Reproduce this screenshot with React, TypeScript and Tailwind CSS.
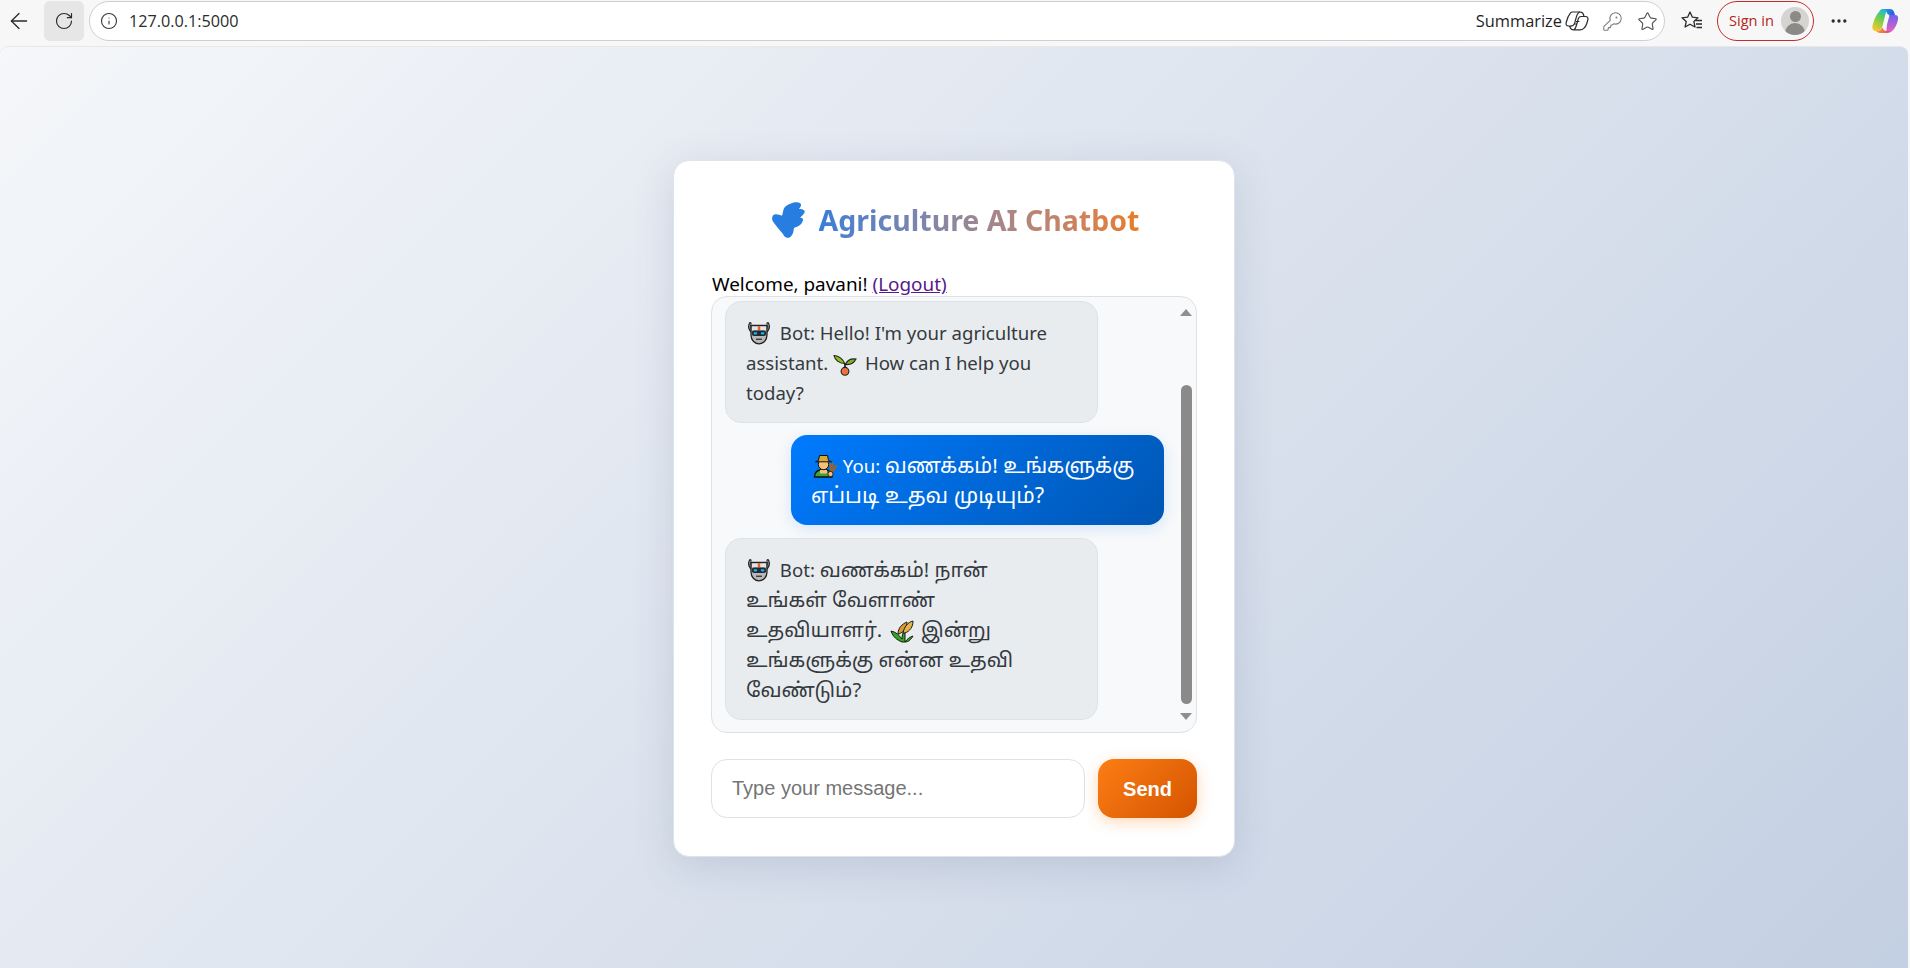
import React from "react";
import { ArrowLeft, RotateCw, Info, KeyRound, Star, MoreHorizontal } from "lucide-react";

const RobotEmoji = () => (
  <svg width="24" height="24" viewBox="0 0 24 24" className="ml-px mr-1 inline-block align-[-5px]">
    <path d="M3.2 2.5 C2 5 2.4 8 4 10 M20.8 2.5 C22 5 21.6 8 20 10" stroke="#222" strokeWidth="2.8" strokeLinecap="round" fill="none" />
    <path d="M3.2 3 C2.4 5 2.8 7.5 4 9.5 M20.8 3 C21.6 5 21.2 7.5 20 9.5" stroke="#bdbdbd" strokeWidth="1" strokeLinecap="round" fill="none" />
    <path d="M4 4.5 H20 V14 C20 19 16.5 22.8 12 22.8 C7.5 22.8 4 19 4 14 Z" fill="#b9b9b9" stroke="#222" strokeWidth="1.3" />
    <path d="M5 5.4 H19 V9 H5 Z" fill="#e4e4e4" />
    <rect x="10.8" y="5.2" width="2.4" height="4" fill="#ef5a26" />
    <rect x="4.8" y="9.5" width="14.4" height="5.6" rx="2.4" fill="#1f2a30" />
    <rect x="6.6" y="11.2" width="3.6" height="2.2" rx="0.8" fill="#22b3ea" />
    <rect x="13.8" y="11.2" width="3.6" height="2.2" rx="0.8" fill="#22b3ea" />
    <rect x="9" y="17.6" width="6" height="1.3" fill="#333" />
  </svg>
);

const SeedlingEmoji = () => (
  <svg width="24" height="24" viewBox="0 0 24 24" className="mr-[3px] inline-block align-[-6px]">
    <path d="M12 12 C10 7 6 4 1 3.5 C2 8 6 11.5 11.5 11.5 Z" fill="#8cc21f" stroke="#222" strokeWidth="1.1" />
    <path d="M12.5 12.5 C14 8.5 18 6.5 23 7 C21 11 17 13 12.5 12.5 Z" fill="#7ab51d" stroke="#222" strokeWidth="1.1" />
    <path d="M12 11 V18" stroke="#222" strokeWidth="1.8" />
    <circle cx="12" cy="19.3" r="3.9" fill="#e8743b" stroke="#222" strokeWidth="1.1" />
  </svg>
);

const FarmerEmoji = () => (
  <svg width="24" height="24" viewBox="0 0 24 24" className="ml-0.5 mr-px inline-block align-[-5px]">
    <path d="M1.5 23 C1.5 17.5 5 15.5 10.5 15.5 C16 15.5 19 18 19 23 Z" fill="#3fa33a" stroke="#111" strokeWidth="1.3" />
    <rect x="7" y="16" width="7" height="3.5" fill="#f3c27a" />
    <circle cx="10.5" cy="10.5" r="5.2" fill="#f2c078" stroke="#111" strokeWidth="1" />
    <path d="M2.5 7.8 H18.5 L15.5 6.4 L14.5 1.5 H6.5 L5.5 6.4 Z" fill="#d9a92e" stroke="#111" strokeWidth="1" />
    <path d="M17 19 L20 10 M19 18 L23 12 M18 14 L17 10" stroke="#9a6426" strokeWidth="2.2" strokeLinecap="round" />
    <circle cx="17.5" cy="20" r="2.6" fill="#f2c078" stroke="#111" strokeWidth="0.8" />
  </svg>
);

const RiceEmoji = () => (
  <svg width="24" height="24" viewBox="0 0 24 24" className="ml-[3px] mr-[2px] inline-block align-[-6px]">
    <path d="M12 23 C7 21 3 18 1 12 C6 13 9 16 12 20 C12 16 13 13 15 11 C15 15 15 19 15 23 Z M15 23 C17 20 20 18 23 17 C21 21 18 23 15 23 Z" fill="#2fa81f" stroke="#1a1a1a" strokeWidth="1" />
    <path d="M8 15 C8 9 12 5 17 3 C17 8 14 13 9 15 Z" fill="#d89c2e" stroke="#1a1a1a" strokeWidth="1" />
    <path d="M13 14 C14 8 18 3 23 2 C23 8 20 12 15 14 Z" fill="#e6b04a" stroke="#1a1a1a" strokeWidth="1" />
  </svg>
);

const TitleIcon = () => (
  <svg width="36" height="36" viewBox="0 0 36 36" className="shrink-0">
    <path
      d="M17 2.3 C20 0.5 24 0 25 0.3 C27 0.6 29.5 1.6 29 3.2 C28.8 5 27.5 6 27 7 C29 7 32.6 7.4 32.7 9.4 C32.8 12 30 13.6 28 15.7 C29.5 15.7 31.4 16.4 31 18.2 C30.4 20.6 29 22 28 23 C26 24.6 24 25 22 26 C21.6 28.5 21.4 31 20 33 C18.6 35.6 16.4 36 15 35.7 C13 35.6 12 34 11 32 C8 28.5 5 25 2 21 C0.4 19 -0.4 16.4 0.4 14.7 C1 13 2.4 12.4 3.6 12.3 C6 12.2 8.4 13.2 10 13.7 C11 11 11 8.4 12 6.3 C13 4.4 15 3.2 17 2.3 Z"
      fill="#277ee0"
    />
  </svg>
);

const CopilotLogo = () => (
  <svg width="28" height="30" viewBox="0 0 28 30">
    <defs>
      <linearGradient id="cpLeft" x1="0.7" y1="0" x2="0.3" y2="1">
        <stop offset="0" stopColor="#1fb6d8" />
        <stop offset="0.45" stopColor="#6fcf4a" />
        <stop offset="1" stopColor="#f7c62f" />
      </linearGradient>
      <linearGradient id="cpTop" x1="0" y1="0" x2="1" y2="0.4">
        <stop offset="0" stopColor="#23a9e6" />
        <stop offset="1" stopColor="#2a5fe0" />
      </linearGradient>
      <linearGradient id="cpRight" x1="0.5" y1="0" x2="0.5" y2="1">
        <stop offset="0" stopColor="#6b63ea" />
        <stop offset="1" stopColor="#ee5fc0" />
      </linearGradient>
      <linearGradient id="cpBottom" x1="0" y1="0" x2="1" y2="0">
        <stop offset="0" stopColor="#f9a72e" />
        <stop offset="1" stopColor="#ef3d6c" />
      </linearGradient>
    </defs>
    <path d="M8 6 C9 3.5 10.5 3 13 3 H17 C15.5 4 14.8 7 14 10 L11.5 20 C10.5 24 8 25 5 25 C2 25 1 22.5 1.5 20 C2.5 15 5 9 8 6 Z" fill="url(#cpLeft)" />
    <path d="M12 3 H19 C21 3 22.5 4 23 6 L24 9 H19 C17.5 9 16 8 15.5 6 C15 4.5 14 3.4 12 3 Z" fill="url(#cpTop)" />
    <path d="M18 9 H24 C26.5 9 27.5 11 27 13.5 C26 19 23 24 20.5 25.5 C19 26.5 17 27 15 27 C15.5 25 15.5 22 16 18.5 L17.5 13 C18 11 18.5 10 18 9 Z" fill="url(#cpRight)" />
    <path d="M5 25 C8 25 10.5 24 11.5 21.5 C12 23.5 13.5 25 15.5 25 H19 C18 26.5 16.5 27 14.5 27 H9 C7.5 27 6 26.3 5 25 Z" fill="url(#cpBottom)" />
  </svg>
);

const SummarizeIcon = () => (
  <svg width="24" height="24" viewBox="0 0 24 24" fill="none" stroke="#2b2b2b" strokeWidth="1.2" strokeLinejoin="round">
    <path d="M7.5 3 H15 C17 3 18.2 4 18.6 6 L19 7.5 H20.5 C22.6 7.5 23.3 9 22.8 11 C22 14.5 20.5 18 18.5 19.6 C17.6 20.4 16.5 20.8 15 20.8 H8.8 C7 20.8 5.6 20 5 18.2 L4.6 17 H3.4 C1.4 17 0.7 15.5 1.2 13.5 C2 10 3.4 6.6 5.3 4.2 C5.9 3.4 6.7 3 7.5 3 Z" />
    <path d="M15 3 C12.8 3.6 12 5.6 11.4 7.8 L9.6 14.4 C9 16.6 7 17.2 4.6 17" />
    <path d="M19 7.5 H16 C14.4 7.5 13.6 8.6 13.2 10 L11.4 16.5 C10.8 18.6 10 20.2 8.8 20.8" />
    <path d="M11 12.5 H14.4 M9.4 15 H12" />
  </svg>
);

const FavoritesIcon = () => (
  <svg width="24" height="24" viewBox="0 0 24 24" fill="none" stroke="#2b2b2b" strokeWidth="1.3" strokeLinejoin="round">
    <path d="M10 3 L12.4 8.2 L18 8.8 L13.9 12.6 L15 18 L10 15.2 L5.1 18 L6.2 12.6 L2 8.8 L7.6 8.2 Z" />
    <path d="M15.5 11.5 H22 M16 15 H22 M16.5 18.5 H22" />
  </svg>
);

// tamil glyphs come out small in this font, so they get their own size
const Ta = ({ children }: { children: React.ReactNode }) => (
  <span className="text-[20.2px] leading-none">{children}</span>
);

const Toolbar = () => (
  <div className="flex h-[46px] shrink-0 items-start pt-px">
    <div className="flex h-10 w-[38px] items-center justify-center">
      <ArrowLeft className="h-[26px] w-[26px] text-[#2b2b2b]" strokeWidth={1.2} />
    </div>
    <div className="ml-1.5 flex h-10 w-10 items-center justify-center rounded-md bg-[#e6e6e6]">
      <RotateCw className="h-[20px] w-[20px] text-[#2b2b2b]" strokeWidth={1.4} />
    </div>
    <div className="ml-[5px] flex h-10 w-[1576px] items-center rounded-full border border-[#cfcfcf] bg-white pl-[10px] pr-[6px]">
      <Info className="h-[18px] w-[18px] text-[#3a3a3a]" strokeWidth={1.5} />
      <span className="ml-[11px] font-['Open_Sans',sans-serif] text-[16.2px] text-[#2b2b2b]">127.0.0.1:5000</span>
      <span className="ml-auto font-['Open_Sans',sans-serif] text-[16.4px] text-[#1f1f1f]">Summarize</span>
      <span className="ml-[3px]">
        <SummarizeIcon />
      </span>
      <KeyRound className="ml-[13px] h-[21px] w-[21px] text-[#7a7a7a]" strokeWidth={1.2} />
      <Star className="ml-[14px] h-[21px] w-[21px] text-[#555]" strokeWidth={1.3} />
    </div>
    <div className="ml-[15px] flex h-10 items-center">
      <FavoritesIcon />
    </div>
    <div className="ml-[13px] flex h-10 w-[97px] items-center justify-between rounded-full border border-[#c42b2b] pl-[11px] pr-1">
      <span className="font-['Open_Sans',sans-serif] text-[14.6px] text-[#b3261e]">Sign in</span>
      <span className="relative h-7 w-7 overflow-hidden rounded-full bg-[#d6d4d0]">
        <span className="absolute left-[8.5px] top-[4px] h-[11px] w-[11px] rounded-full bg-[#8c8a86]" />
        <span className="absolute left-[4px] top-[16px] h-[14px] w-5 rounded-t-full bg-[#8c8a86]" />
      </span>
    </div>
    <div className="ml-[11px] flex h-10 w-7 items-center justify-center">
      <MoreHorizontal className="h-5 w-5 text-[#2b2b2b]" strokeWidth={2} />
    </div>
    <div className="ml-[18px] flex h-10 items-center">
      <CopilotLogo />
    </div>
  </div>
);

const botBubble =
  "w-[373px] whitespace-nowrap rounded-2xl border border-[#dee2e6] bg-[#e9ecef] px-5 pb-[14px] pt-[16px] text-[#343a40]";

const ChatBox = () => (
  <div className="flex h-[437px] overflow-hidden rounded-2xl border border-[#dee2e6] bg-[#f8f9fa]">
    <div className="flex min-w-0 flex-1 flex-col gap-3 pl-[13px] pr-[13px] pt-1 font-['Noto_Sans','Noto_Sans_Tamil','Lohit_Tamil',sans-serif] text-[18.6px] leading-[30px]">
      <div className={botBubble}>
        <RobotEmoji /> Bot: Hello! I'm your agriculture
        <br />
        assistant. <SeedlingEmoji /> How can I help you
        <br />
        today?
      </div>
      <div className="h-[90px] w-[373px] self-end whitespace-nowrap rounded-2xl bg-[linear-gradient(135deg,#007bff,#0056b3)] px-5 pb-[14px] pt-[16px] text-white shadow-[0_4px_15px_rgba(0,123,255,0.15)]">
        <FarmerEmoji /> You: <span className="text-[20.8px] leading-none">வணக்கம்! உங்களுக்கு</span>
        <br />
        <span className="text-[21.6px] leading-none">எப்படி உதவ முடியும்?</span>
      </div>
      <div className={`mt-px ${botBubble}`}>
        <RobotEmoji /> Bot: <Ta>வணக்கம்! நான்</Ta>
        <br />
        <Ta>உங்கள் வேளாண்</Ta>
        <br />
        <Ta>உதவியாளர்.</Ta> <RiceEmoji /> <Ta>இன்று</Ta>
        <br />
        <Ta>உங்களுக்கு என்ன உதவி</Ta>
        <br />
        <Ta>வேண்டும்?</Ta>
      </div>
    </div>
    <div className="flex w-[19px] shrink-0 flex-col items-center pr-[1px] pt-[12px]">
      <div className="h-0 w-0 border-x-[6px] border-b-[7px] border-x-transparent border-b-[#8f8f8f]" />
      <div className="mt-[69px] h-[319px] w-[11px] rounded-full bg-[#8a8a8a]" />
      <div className="mt-[9px] h-0 w-0 border-x-[6px] border-t-[7px] border-x-transparent border-t-[#8f8f8f]" />
    </div>
  </div>
);

export default function App() {
  return (
    <div className="flex h-[968px] w-[1910px] flex-col overflow-hidden bg-[#f7f7f7]">
      <Toolbar />
      <div className="mr-[2px] flex flex-1 items-start justify-center rounded-t-lg border-t border-[#e8e8e8] bg-[linear-gradient(135deg,#f5f7fa,#c3cfe2)] pt-[113px]">
        <div className="h-[697px] w-[562px] rounded-2xl border border-[#dfe3ea] bg-white px-[37px] pt-[37px] shadow-[0_10px_40px_rgba(60,80,120,0.16)]">
          <h1 className="flex h-[44px] items-center justify-center gap-[11px] pl-[3px]">
            <TitleIcon />
            <span className="bg-gradient-to-r from-[#3a7dd6] to-[#e97c22] bg-clip-text font-['Noto_Sans',sans-serif] text-[28.5px] font-bold text-transparent">
              Agriculture AI Chatbot
            </span>
          </h1>
          <p className="mt-[28px] h-[26px] pl-px font-['Noto_Sans',sans-serif] text-[18.9px] leading-[29px] text-black">
            Welcome, pavani!{" "}
            <a href="#" className="text-[#551a8b] underline">
              (Logout)
            </a>
          </p>
          <ChatBox />
          <div className="mt-[26px] flex gap-[13px]">
            <input
              placeholder="Type your message..."
              className="h-[59px] w-[374px] rounded-2xl border border-[#dee2e6] bg-white px-5 font-['Liberation_Sans',sans-serif] text-[20px] outline-none placeholder:text-[#757575]"
            />
            <button className="h-[59px] w-[99px] rounded-2xl bg-[linear-gradient(135deg,#fd7e14,#d35400)] font-['Liberation_Sans',sans-serif] text-[20px] font-bold text-white shadow-[0_4px_15px_rgba(253,126,20,0.3)]">
              Send
            </button>
          </div>
        </div>
      </div>
    </div>
  );
}
